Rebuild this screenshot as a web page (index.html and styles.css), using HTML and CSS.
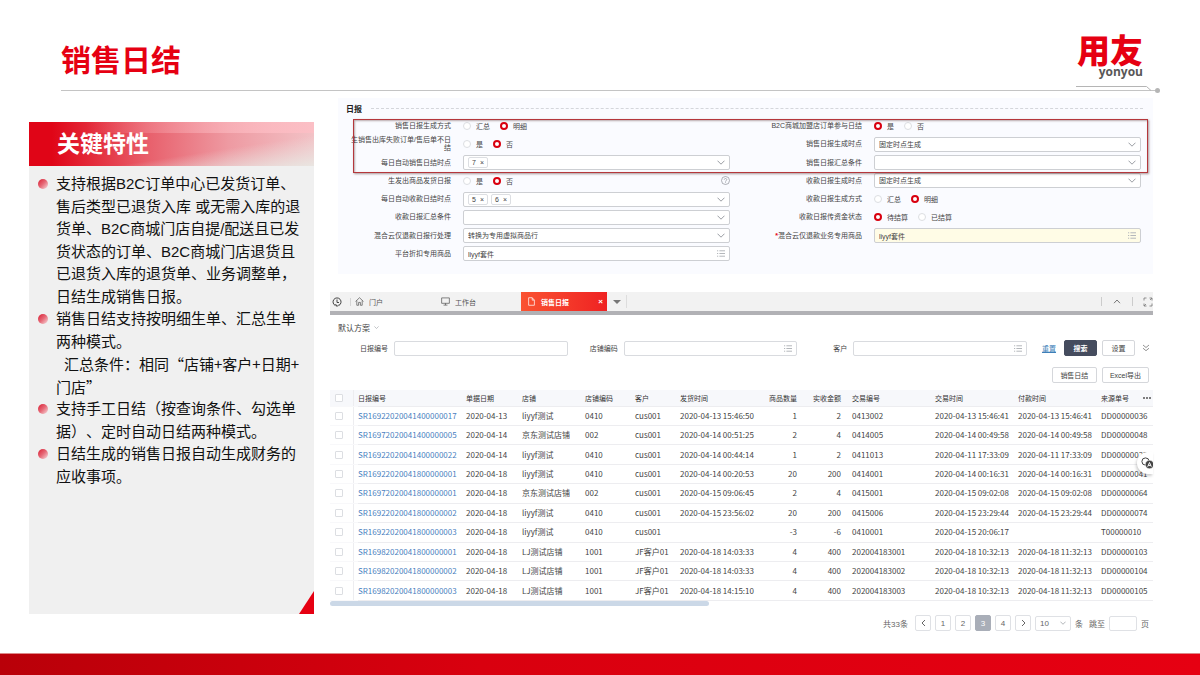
FILE: index.html
```html
<!DOCTYPE html>
<html lang="zh-CN">
<head>
<meta charset="utf-8">
<meta name="viewport" content="width=device-width, initial-scale=1">
<title>销售日结</title>
<link rel="stylesheet" href="styles.css">
</head>
<body>
<svg class="sprite" aria-hidden="true">
  <symbol id="down" viewBox="0 0 8 5"><path d="M.5.7 4 4.2 7.5.7"/></symbol>
  <symbol id="list" viewBox="0 0 8 7"><path d="M0 .8h1.2M2.4.8H8M0 3.5h1.2M2.4 3.5H8M0 6.2h1.2M2.4 6.2H8"/></symbol>
</svg>

<header class="top">
  <div class="top-row">
    <h1>销售日结</h1>
    <div class="logo"><span class="logo-cn">用友</span><span class="logo-en">yonyou</span></div>
  </div>
  <div class="rule">
    <svg class="notch" viewBox="0 0 84 8" aria-hidden="true"><path class="stroke" d="M0 1.5h70.500L75 5.500"/><circle cx="81.500" cy="5.500" r="2.500"/></svg>
  </div>
</header>

<main class="content">
  <section class="features">
    <h2>关键特性</h2>
    <ul>
      <li>支持根据B2C订单中心已发货订单、售后类型已退货入库 或无需入库的退货单、B2C商城门店自提/配送且已发货状态的订单、B2C商城门店退货且已退货入库的退货单、业务调整单，日结生成销售日报。</li>
      <li>销售日结支持按明细生单、汇总生单两种模式。<p class="note">汇总条件：相同“店铺+客户+日期+<wbr>门店”</p></li>
      <li>支持手工日结（按查询条件、勾选单据）、定时自动日结两种模式。</li>
      <li>日结生成的销售日报自动生成财务的应收事项。</li>
    </ul>
  </section>

  <div class="screens">
    <form class="settings">
      <h3>日报</h3>
      <div class="form-grid">
        <span class="lab" id="l1">销售日报生成方式</span>
        <div class="radios" role="radiogroup" aria-labelledby="l1"><label><input type="radio" name="a">汇总</label><label><input type="radio" name="a" checked>明细</label></div>
        <span class="lab" id="l2">B2C商城加盟店订单参与日结</span>
        <div class="radios" role="radiogroup" aria-labelledby="l2"><label><input type="radio" name="b" checked>是</label><label><input type="radio" name="b">否</label></div>

        <span class="lab wide" id="l3">生销售出库失败订单/售后单不日结</span>
        <div class="radios" role="radiogroup" aria-labelledby="l3"><label><input type="radio" name="c">是</label><label><input type="radio" name="c" checked>否</label></div>
        <label class="lab" for="s1">销售日报生成时点</label>
        <div class="box"><select id="s1"><option>固定时点生成</option></select><svg class="chev"><use href="#down"/></svg></div>

        <span class="lab" id="l4">每日自动销售日结时点</span>
        <div class="box" role="group" aria-labelledby="l4"><span class="tag">7<button type="button" aria-label="移除 7">×</button></span><svg class="chev"><use href="#down"/></svg></div>
        <label class="lab" for="s2">销售日报汇总条件</label>
        <div class="box"><select id="s2"><option></option></select><svg class="chev"><use href="#down"/></svg></div>

        <span class="lab" id="l5">生发出商品发货日报</span>
        <div class="radios" role="radiogroup" aria-labelledby="l5"><label><input type="radio" name="d">是</label><label><input type="radio" name="d" checked>否</label><svg class="help" viewBox="0 0 9 9"><circle cx="4.500" cy="4.500" r="4"/><path d="M3.200 3.700c0-1.600 2.600-1.600 2.600 0 0 .9-1.300.9-1.300 2M4.500 6.300v.8"/></svg></div>
        <label class="lab" for="s3">收款日报生成时点</label>
        <div class="box"><select id="s3"><option>固定时点生成</option></select><svg class="chev"><use href="#down"/></svg></div>

        <span class="lab" id="l6">每日自动收款日结时点</span>
        <div class="box" role="group" aria-labelledby="l6"><span class="tag">5<button type="button" aria-label="移除 5">×</button></span><span class="tag">6<button type="button" aria-label="移除 6">×</button></span><svg class="chev"><use href="#down"/></svg></div>
        <span class="lab" id="l7">收款日报生成方式</span>
        <div class="radios" role="radiogroup" aria-labelledby="l7"><label><input type="radio" name="e">汇总</label><label><input type="radio" name="e" checked>明细</label></div>

        <label class="lab" for="s4">收款日报汇总条件</label>
        <div class="box"><select id="s4"><option></option></select><svg class="chev"><use href="#down"/></svg></div>
        <span class="lab" id="l8">收款日报传资金状态</span>
        <div class="radios" role="radiogroup" aria-labelledby="l8"><label><input type="radio" name="f" checked>待结算</label><label><input type="radio" name="f">已结算</label></div>

        <label class="lab" for="s5">混合云仅退款日报行处理</label>
        <div class="box"><select id="s5"><option>转换为专用虚拟商品行</option></select><svg class="chev"><use href="#down"/></svg></div>
        <label class="lab" for="t1"><b>*</b>混合云仅退款业务专用商品</label>
        <div class="box required"><input id="t1" type="text" value="liyyf套件"><svg class="list"><use href="#list"/></svg></div>

        <label class="lab" for="t2">平台折扣专用商品</label>
        <div class="box"><input id="t2" type="text" value="liyyf套件"><svg class="list"><use href="#list"/></svg></div>
      </div>
      <div class="highlight"></div>
    </form>

    <section class="report">
      <nav class="tabs">
        <button type="button" class="icon-btn history" aria-label="历史"><svg viewBox="0 0 10 10"><path d="M3.500 8.600A4 4 0 1 1 6.800 8.500M5 2.500v3h2M3.500 7l1.500 2.500L7 7.500"/></svg></button>
        <a href="#" class="tab home"><svg viewBox="0 0 10 10"><path d="M.6 5 5 .8 9.400 5M2 4v5.200h2V6h2v3.200h2V4"/></svg>门户</a>
        <a href="#" class="tab work"><svg viewBox="0 0 10 10"><path d="M.7 1h8.600v6H.7zM2.800 9h4.400M5 7v2"/></svg>工作台</a>
        <a href="#" class="tab active"><svg viewBox="0 0 8 10"><path d="M.8.8h4L7.200 3.500v5.700H.8zM4.800.8v2.700h2.400"/></svg>销售日报<span class="close">×</span></a>
        <button type="button" class="icon-btn more" aria-label="更多标签"><svg viewBox="0 0 8 4"><path d="M0 0h8L4 4z"/></svg></button>
        <button type="button" class="icon-btn fold" aria-label="收起"><svg viewBox="0 0 8 5"><path d="M1 4.200 4 1l3 3.200"/></svg></button>
        <button type="button" class="icon-btn full" aria-label="全屏"><svg viewBox="0 0 10 10"><path d="M1 3.500V1h2.500M6.500 1H9v2.500M9 6.500V9H6.500M3.500 9H1V6.500M1 9l2-2M9 1 7 3"/></svg></button>
      </nav>

      <button type="button" class="scheme">默认方案<svg class="chev"><use href="#down"/></svg></button>

      <form class="filters">
        <div class="field"><label for="f1">日报编号</label><div class="box"><input id="f1" type="text"></div></div>
        <div class="field"><label for="f2">店铺编码</label><div class="box"><input id="f2" type="text"><svg class="list"><use href="#list"/></svg></div></div>
        <div class="field"><label for="f3">客户</label><div class="box"><input id="f3" type="text"><svg class="list"><use href="#list"/></svg></div></div>
        <div class="actions">
          <a href="#" class="reset">重置</a>
          <button type="button" class="btn primary">搜索</button>
          <button type="button" class="btn">设置</button>
          <button type="button" class="icon-btn" aria-label="展开"><svg viewBox="0 0 8 8"><path d="M1 1l3 2.500L7 1M1 4.200l3 2.500 3-2.500"/></svg></button>
        </div>
      </form>

      <div class="toolbar">
        <button type="button" class="btn">销售日结</button>
        <button type="button" class="btn">Excel导出</button>
      </div>

      <div class="table-wrap">
        <table>
          <colgroup><col class="c-check"><col class="c-id"><col class="c-date"><col class="c-shop"><col class="c-code"><col class="c-cust"><col class="c-send"><col class="c-qty"><col class="c-amt"><col class="c-trade"><col class="c-time"><col class="c-time"><col class="c-src"></colgroup>
          <thead><tr><th><input type="checkbox" aria-label="全选"></th><th>日报编号</th><th>单据日期</th><th>店铺</th><th>店铺编码</th><th>客户</th><th>发货时间</th><th class="num">商品数量</th><th class="num">实收金额</th><th class="trade">交易编号</th><th>交易时间</th><th>付款时间</th><th><div class="last">来源单号<svg class="dots" viewBox="0 0 8 2"><circle cx="1" cy="1" r="1"/><circle cx="4" cy="1" r="1"/><circle cx="7" cy="1" r="1"/></svg></div></th></tr></thead>
          <tbody>
            <tr><td><input type="checkbox" aria-label="选择"></td><td><a href="#">SR16922020041400000017</a></td><td>2020-04-13</td><td>liyyf测试</td><td>0410</td><td>cus001</td><td>2020-04-13 15:46:50</td><td class="num">1</td><td class="num">2</td><td class="trade">0413002</td><td>2020-04-13 15:46:41</td><td>2020-04-13 15:46:41</td><td>DD00000036</td></tr>
            <tr><td><input type="checkbox" aria-label="选择"></td><td><a href="#">SR16972020041400000005</a></td><td>2020-04-14</td><td>京东测试店铺</td><td>002</td><td>cus001</td><td>2020-04-14 00:51:25</td><td class="num">2</td><td class="num">4</td><td class="trade">0414005</td><td>2020-04-14 00:49:58</td><td>2020-04-14 00:49:58</td><td>DD00000048</td></tr>
            <tr><td><input type="checkbox" aria-label="选择"></td><td><a href="#">SR16922020041400000022</a></td><td>2020-04-14</td><td>liyyf测试</td><td>0410</td><td>cus001</td><td>2020-04-14 00:44:14</td><td class="num">1</td><td class="num">2</td><td class="trade">0411013</td><td>2020-04-11 17:33:09</td><td>2020-04-11 17:33:09</td><td>DD00000022</td></tr>
            <tr><td><input type="checkbox" aria-label="选择"></td><td><a href="#">SR16922020041800000001</a></td><td>2020-04-18</td><td>liyyf测试</td><td>0410</td><td>cus001</td><td>2020-04-14 00:20:53</td><td class="num">20</td><td class="num">200</td><td class="trade">0414001</td><td>2020-04-14 00:16:31</td><td>2020-04-14 00:16:31</td><td>DD00000041</td></tr>
            <tr><td><input type="checkbox" aria-label="选择"></td><td><a href="#">SR16972020041800000001</a></td><td>2020-04-18</td><td>京东测试店铺</td><td>002</td><td>cus001</td><td>2020-04-15 09:06:45</td><td class="num">2</td><td class="num">4</td><td class="trade">0415001</td><td>2020-04-15 09:02:08</td><td>2020-04-15 09:02:08</td><td>DD00000064</td></tr>
            <tr><td><input type="checkbox" aria-label="选择"></td><td><a href="#">SR16922020041800000002</a></td><td>2020-04-18</td><td>liyyf测试</td><td>0410</td><td>cus001</td><td>2020-04-15 23:56:02</td><td class="num">20</td><td class="num">200</td><td class="trade">0415006</td><td>2020-04-15 23:29:44</td><td>2020-04-15 23:29:44</td><td>DD00000074</td></tr>
            <tr><td><input type="checkbox" aria-label="选择"></td><td><a href="#">SR16922020041800000003</a></td><td>2020-04-18</td><td>liyyf测试</td><td>0410</td><td>cus001</td><td></td><td class="num">-3</td><td class="num">-6</td><td class="trade">0410001</td><td>2020-04-15 20:06:17</td><td></td><td>T00000010</td></tr>
            <tr><td><input type="checkbox" aria-label="选择"></td><td><a href="#">SR16982020041800000001</a></td><td>2020-04-18</td><td>LJ测试店铺</td><td>1001</td><td>JF客户01</td><td>2020-04-18 14:03:33</td><td class="num">4</td><td class="num">400</td><td class="trade">202004183001</td><td>2020-04-18 10:32:13</td><td>2020-04-18 11:32:13</td><td>DD00000103</td></tr>
            <tr><td><input type="checkbox" aria-label="选择"></td><td><a href="#">SR16982020041800000002</a></td><td>2020-04-18</td><td>LJ测试店铺</td><td>1001</td><td>JF客户01</td><td>2020-04-18 14:03:33</td><td class="num">4</td><td class="num">400</td><td class="trade">202004183002</td><td>2020-04-18 10:32:13</td><td>2020-04-18 11:32:13</td><td>DD00000104</td></tr>
            <tr><td><input type="checkbox" aria-label="选择"></td><td><a href="#">SR16982020041800000003</a></td><td>2020-04-18</td><td>LJ测试店铺</td><td>1001</td><td>JF客户01</td><td>2020-04-18 14:15:10</td><td class="num">4</td><td class="num">400</td><td class="trade">202004183003</td><td>2020-04-18 10:32:13</td><td>2020-04-18 11:32:13</td><td>DD00000105</td></tr>
          </tbody>
        </table>
        <div class="scroll"></div>
        <button type="button" class="float" aria-label="翻译"><svg viewBox="0 0 14 12"><circle class="ring" cx="4.500" cy="4.500" r="3.600"/><circle class="disc" cx="8.500" cy="7.500" r="4.200"/><path class="mark" d="M6.700 9.700 8.500 5.500l1.800 4.200M7.400 8.400h2.200"/></svg></button>
      </div>

      <nav class="pager">
        <span class="total">共33条</span>
        <button type="button" aria-label="上一页"><svg viewBox="0 0 5 8"><path d="M4 1 1 4l3 3"/></svg></button>
        <button type="button">1</button><button type="button">2</button><button type="button" class="on">3</button><button type="button">4</button>
        <button type="button" aria-label="下一页"><svg viewBox="0 0 5 8"><path d="M1 1l3 3-3 3"/></svg></button>
        <div class="box size"><select id="ps" aria-label="每页条数"><option>10</option></select><svg class="chev"><use href="#down"/></svg></div>
        <label for="ps">条</label>
        <label class="jump" for="pg">跳至</label>
        <input id="pg" type="text">
        <span>页</span>
      </nav>
    </section>
  </div>
</main>
<footer class="bottom"></footer>
</body>
</html>
```
FILE: styles.css
```css
* { box-sizing: border-box; }

body {
  margin: 0;
  min-height: 100vh;
  display: flex;
  flex-direction: column;
  background: #fff;
  color: #444;
  font-family: "Liberation Sans", "Noto Sans CJK SC", sans-serif;
  font-size: 7px;
}

h1, h2, h3, ul, p { margin: 0; padding: 0; }
a { color: inherit; text-decoration: none; }
svg { display: block; flex: none; fill: none; stroke: currentColor; }
.sprite { position: absolute; width: 0; height: 0; }

button, input, select {
  margin: 0;
  padding: 0;
  border: 0;
  background: none;
  color: inherit;
  font: inherit;
  outline: 0;
  appearance: none;
}

/* Slide header */
.top { padding: 32px 39px 0 61px; }
.top-row {
  display: flex;
  justify-content: space-between;
  height: 59px;
  padding-right: 18px;
}
h1 {
  color: #e60012;
  font-size: 30px;
  line-height: 58px;
  font-weight: 700;
}
.logo {
  display: flex;
  flex-direction: column;
  align-items: flex-end;
}
.logo-cn {
  color: #e60012;
  font-family: "Noto Sans CJK SC", sans-serif;
  font-size: 33px;
  font-weight: 900;
  line-height: 34px;
}
.logo-en {
  color: #595757;
  font-family: "Open Sans", sans-serif;
  font-size: 12px;
  font-weight: 700;
  line-height: 12px;
}
.rule {
  position: relative;
  height: 1px;
  margin-top: -1px;
  margin-right: 3px;
  background: #c4c4c4;
}
.notch {
  position: absolute;
  right: -2px;
  bottom: -2px;
  width: 84px;
  height: 8px;
  overflow: visible;
  stroke: #b5b5b5;
}
.notch circle { fill: #b5b5b5; stroke: none; }

/* Body columns */
.content {
  flex: 1;
  display: grid;
  grid-template-columns: minmax(0, 285fr) minmax(0, 823fr);
  gap: 16px;
  align-items: start;
  padding: 7px 47px 20px 29px;
}

.features {
  position: relative;
  min-height: 492px;
  margin-top: 24px;
  background: #f0f0f0;
  color: #111;
}
.features::after {
  content: "";
  position: absolute;
  right: 0;
  bottom: 0;
  width: 15px;
  height: 23px;
  background: #e60012;
  clip-path: polygon(100% 0, 100% 100%, 0 100%);
}
.features h2 {
  height: 44px;
  padding-left: 28px;
  background:
    linear-gradient(90deg, rgba(255, 160, 170, 0) 20%, rgba(255, 190, 197, .7) 85%) 0 0 / 100% 11px no-repeat,
    linear-gradient(to top left, #e9e5e1 0%, rgba(240, 190, 194, 0) 35%),
    linear-gradient(90deg, #e00517 8%, #e8606c 42%, #ee9aa2 70%, #f2c2c6 100%);
  color: #fff;
  font-size: 23px;
  line-height: 44px;
}
.features ul {
  padding: 7px 10px 0 27px;
  list-style: none;
  font-size: 15px;
  line-height: 1.5;
  text-spacing-trim: space-all;
}
.features li { position: relative; }
.features li::before {
  content: "";
  position: absolute;
  left: -18px;
  top: 6px;
  width: 10px;
  height: 10px;
  border-radius: 50%;
  background: linear-gradient(135deg, #dd3346 15%, #e66a78 50%, #f6d3d6 95%);
}
.note { font-family: "Noto Sans CJK SC", sans-serif; text-indent: 8px; }

/* Shared controls */
.box {
  position: relative;
  display: flex;
  align-items: center;
  gap: 3px;
  min-width: 0;
  height: 15px;
  padding: 0 4px;
  border: 1px solid #cdcfd3;
  border-radius: 2px;
  background: #fff;
}
.box > input, .box > select { flex: 1; min-width: 0; height: 13px; }
.chev { width: 8px; height: 5px; margin-left: auto; color: #9a9da3; }
.list { width: 8px; height: 7px; color: #b4b7bb; }

/* Settings form */
.settings {
  position: relative;
  margin-left: 8px;
  padding: 4px 12px 10px;
  min-height: 176px;
  background: #fafbff;
}
.settings h3 {
  display: flex;
  align-items: center;
  gap: 9px;
  height: 12px;
  margin: 0 -2px 3px -4px;
  color: #222;
  font-size: 8px;
}
.settings h3::after { content: ""; flex: 1; border-top: 1px dashed #d4d6db; }
.form-grid {
  display: grid;
  grid-template-columns: minmax(0, 101fr) minmax(0, 267fr) minmax(0, 120fr) minmax(0, 267fr);
  grid-template-rows: repeat(8, 1fr);
  column-gap: 12px;
  align-items: center;
  min-height: 146px;
}
.lab { text-align: right; white-space: nowrap; line-height: 8px; }
.lab.wide { white-space: normal; }
.lab b { color: #e60012; }
.radios { display: flex; align-items: center; gap: 10px; }
.radios label { display: flex; align-items: center; gap: 5px; }
.radios input {
  width: 8px;
  height: 8px;
  border: 1px solid #dcdee2;
  border-radius: 50%;
  background: #fff;
}
.radios input:checked { border: 2px solid #d9000f; }
.help { width: 9px; height: 9px; margin-left: auto; color: #8c8f96; stroke-width: .7; }
.box.required { background: #fffce6; }
.tag {
  display: flex;
  align-items: center;
  justify-content: center;
  gap: 4px;
  width: 20px;
  height: 11px;
  border: 1px solid #dcdee2;
  border-radius: 2px;
}
.highlight {
  position: absolute;
  top: 21px;
  left: 15px;
  right: 5px;
  height: 54px;
  border: 1px solid #b5373c;
  box-shadow: 1px 1px 2px rgba(90, 50, 50, .5), inset 1px 1px 2px rgba(90, 50, 50, .4);
  pointer-events: none;
}

/* Report window */
.report { position: relative; margin-top: 18px; }
.tabs {
  display: flex;
  align-items: center;
  height: 23px;
  border-bottom: 4px solid #b1b1b5;
  background: #f2f2f2;
}
.icon-btn { display: flex; align-items: center; justify-content: center; color: #777; }
.history { width: 21px; height: 8px; padding-right: 6px; border-right: 1px solid #d5d5d5; color: #444; }
.history svg { width: 10px; height: 10px; }
.tab { display: flex; align-items: center; gap: 5px; height: 19px; color: #555; }
.tab svg { width: 9px; height: 9px; stroke-width: .8; }
.home { width: 90px; padding-left: 4px; }
.work { width: 80px; }
.tab.active {
  width: 86px;
  padding: 0 4px 0 6px;
  background: linear-gradient(90deg, #fa5332, #ef2222);
  color: #fff;
  font-weight: 700;
}
.close { margin-left: auto; font-size: 8px; }
.more { width: 20px; height: 13px; border-right: 1px solid #ddd; }
.more svg { width: 8px; height: 4px; fill: #777; stroke: none; }
.fold { width: 32px; height: 9px; margin-left: auto; border: solid #ccc; border-width: 0 1px; }
.fold svg { width: 8px; height: 5px; }
.full { width: 20px; padding-left: 10px; }
.full svg { width: 10px; height: 10px; stroke-width: .8; }

.scheme {
  display: flex;
  align-items: center;
  gap: 4px;
  height: 15px;
  margin: 5px 0 5px 8px;
  font-size: 8px;
}
.scheme .chev { width: 5px; height: 3px; }

.filters { display: flex; align-items: center; padding: 0 3px 0 8px; }
.field {
  flex: 1;
  display: grid;
  grid-template-columns: 50px minmax(0, 1fr);
  gap: 6px;
  align-items: center;
}
.field label { text-align: right; }
.field .box { border-color: #d9dbdf; }
.actions { display: flex; align-items: center; margin-left: 15px; }
.reset { width: 15px; margin-right: 7px; color: #3d7fb8; text-decoration: underline; }
.btn {
  min-width: 33px;
  height: 16px;
  padding: 0 6px;
  border: 1px solid #d5d7db;
  border-radius: 2px;
  background: #fff;
}
.btn.primary { margin-right: 5px; border-color: #454c5e; background: #454c5e; color: #fff; font-weight: 700; }
.actions .icon-btn { width: 8px; margin-left: 7px; }
.actions .icon-btn svg { width: 8px; height: 8px; stroke-width: .8; }

.toolbar { display: flex; justify-content: flex-end; gap: 5px; padding: 11px 4px 7px; }
.toolbar .btn { padding: 0 7px; min-width: 45px; }

.table-wrap { position: relative; }
table {
  width: 100%;
  height: 211px;
  table-layout: fixed;
  border-collapse: collapse;
  font-family: "Noto Sans CJK SC", sans-serif;
  font-size: 8px;
  line-height: 10px;
}
th, td { padding: 0; text-align: left; white-space: nowrap; border-bottom: 1px solid #ededf0; }
th { height: 16px; background: #f7f8fb; font-size: 7px; font-weight: 400; color: #333; }
td a { color: #4a7fc0; }
th:first-child, td:first-child {
  padding-left: 5px;
  border-bottom-color: #f8f8fa;
  background-image: linear-gradient(#ededf0, #ededf0);
  background-position: 23px 0;
  background-size: 1px 100%;
  background-repeat: no-repeat;
}
table input {
  display: block;
  width: 8px;
  height: 8px;
  border: 1px solid #dcdee2;
  border-radius: 1px;
  background: #fff;
}
.num { text-align: right; }
.trade { padding-left: 11px; }
.last { display: flex; align-items: center; justify-content: space-between; padding-right: 2px; }
.dots { width: 8px; height: 2px; fill: #555; stroke: none; }
.c-check { width: 28px; }
.c-id { width: 108px; }
.c-date { width: 56px; }
.c-shop { width: 63px; }
.c-code { width: 50px; }
.c-cust { width: 45px; }
.c-send { width: 80px; }
.c-qty { width: 37px; }
.c-amt { width: 44px; }
.c-trade { width: 94px; }
.c-time { width: 83px; }
.c-src { width: 52px; }
.scroll { width: 46%; height: 5px; border-radius: 3px; background: #cbd8e7; }
.float {
  position: absolute;
  right: 0;
  top: 62px;
  width: 16px;
  height: 22px;
  padding-left: 4px;
  border-radius: 11px 0 0 11px;
  background: #fff;
  box-shadow: -1px 2px 3px rgba(0, 0, 0, .2);
  overflow: hidden;
}
.float svg { width: 14px; height: 12px; }
.disc { fill: #444; stroke: #fff; stroke-width: .5; }
.mark { stroke: #fff; }

.pager {
  display: flex;
  align-items: center;
  justify-content: flex-end;
  gap: 4px;
  padding: 9px 4px 0 0;
  color: #666;
  font-size: 8px;
}
.pager button {
  display: flex;
  align-items: center;
  justify-content: center;
  width: 16px;
  height: 16px;
  border: 1px solid #dfe1e5;
  border-radius: 2px;
}
.pager button svg { width: 5px; height: 8px; }
.pager .on { border-color: #a9aeb8; background: #a9aeb8; color: #fff; }
.pager .total { margin-right: 3px; }
.size { width: 36px; border-color: #dfe1e5; }
.size .chev { width: 6px; height: 4px; }
.jump { margin-left: 2px; }
#pg { width: 28px; height: 15px; border: 1px solid #dfe1e5; border-radius: 2px; }

.bottom {
  height: 22px;
  border-top: 1px solid #d88;
  background: linear-gradient(90deg, #b90009, #d9000f 40%, #e60012);
}
```
